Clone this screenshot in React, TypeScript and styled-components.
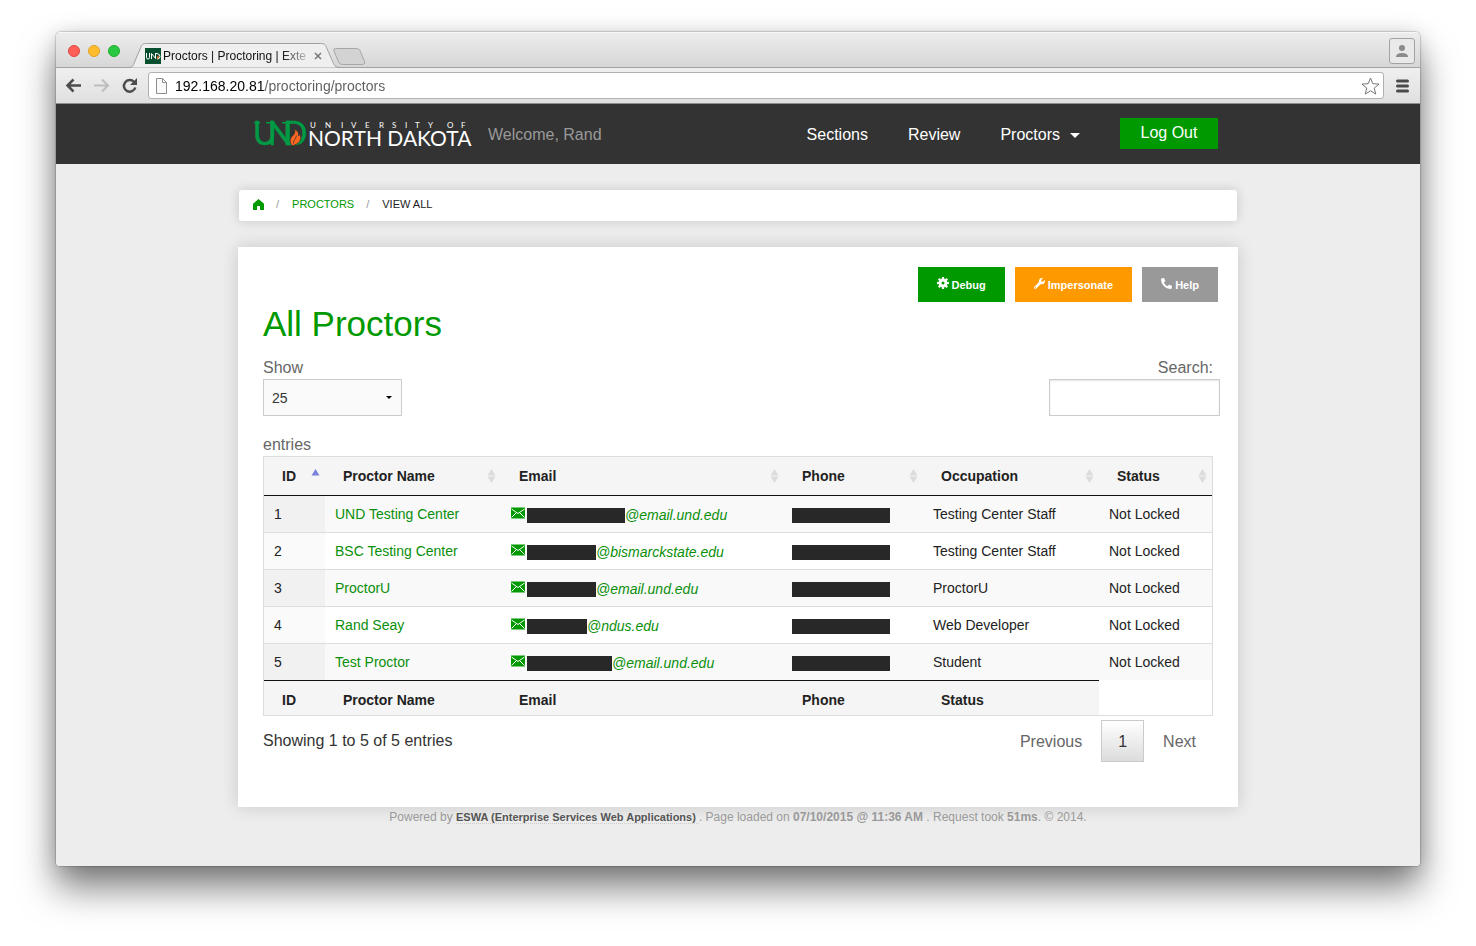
import React from "react";
import styled, { createGlobalStyle, css } from "styled-components";
import { FaPhoneAlt, FaWrench } from "react-icons/fa";

const GREEN = "#009900";
const LINK = "#0a8f0a";

const GlobalStyle = createGlobalStyle`
  *, *::before, *::after { box-sizing: border-box; }
  body {
    margin: 0;
    background: #fff;
    color: #222;
    font-family: "Liberation Sans", Arial, Helvetica, sans-serif;
    font-size: 16px;
    line-height: 20px;
  }
  button, input, select { font-family: inherit; }
  a { text-decoration: none; }
`;

/* ---------- Browser window ---------- */

const Stage = styled.div`
  padding: 32px 56px 80px;
`;

const Window = styled.div`
  border-radius: 5px 5px 4px 4px;
  background: #ededed;
  overflow: hidden;
`;

const WindowShadow = styled.div`
  border-radius: 5px 5px 4px 4px;
  box-shadow: 0 0 1px 1px rgba(0, 0, 0, 0.16), 0 22px 36px rgba(0, 0, 0, 0.5), 0 2px 20px rgba(0, 0, 0, 0.14);
`;

const TabStrip = styled.div`
  display: flex;
  align-items: flex-end;
  height: 36px;
  padding: 0 5px 0 12px;
  background: linear-gradient(#ededed, #d6d6d6);
  box-shadow: inset 0 -1px #a3a3a3, inset 0 1px #f7f7f7;
`;

const Lights = styled.div`
  display: flex;
  gap: 8px;
  padding-bottom: 11px;
`;

const Light = styled.button<{ $fill: string; $edge: string }>`
  width: 12px;
  height: 12px;
  padding: 0;
  border: 1px solid ${(p) => p.$edge};
  border-radius: 50%;
  background: ${(p) => p.$fill};
`;

const Tab = styled.div`
  position: relative;
  display: flex;
  align-items: center;
  width: 216px;
  height: 25px;
  margin-left: 8px;
  padding: 0 16px 0 17px;
`;

const TabShape = styled.svg`
  position: absolute;
  inset: 0;
`;

const Favicon = styled.svg`
  position: relative;
  flex: none;
  margin-right: 2px;
`;

const TabTitle = styled.span`
  position: relative;
  flex: 1;
  white-space: nowrap;
  color: #111;
  font-size: 12px;
  mask-image: linear-gradient(to right, #000 82%, transparent 104%);
`;

const BareButton = styled.button`
  position: relative;
  display: flex;
  flex: none;
  padding: 0;
  border: 0;
  background: none;
`;

const Spacer = styled.div`
  flex: 1;
`;

const NewTab = styled(BareButton)`
  margin: 0 0 3px -12px;
`;

const CloseTab = styled(BareButton)`
  margin: 0 6px;
`;

const UserButton = styled.button`
  display: flex;
  align-items: center;
  justify-content: center;
  width: 26px;
  height: 26px;
  margin-bottom: 4px;
  padding: 0;
  border: 1px solid #a2a2a2;
  border-radius: 3px;
  background: #e9e9e9;
`;

const Toolbar = styled.div`
  display: flex;
  align-items: center;
  height: 36px;
  padding: 0 10px 0 9px;
  border-bottom: 1px solid #8f8f8f;
  background: linear-gradient(#efefef, #e0e0e0);
`;

const NavIcons = styled.div`
  display: flex;
  gap: 12px;
  margin-right: 10px;
`;

const AddressBar = styled.div`
  display: flex;
  flex: 1;
  align-items: center;
  height: 27px;
  margin-right: 11px;
  padding: 0 3px 0 6px;
  border: 1px solid #b0b0b0;
  border-radius: 3px;
  background: #fff;
`;

const Address = styled.input`
  flex: 1;
  height: 22px;
  margin-left: 7px;
  padding: 0;
  border: 0;
  outline: 0;
  color: transparent;
  background: linear-gradient(to right, #000 90px, #5c5c5c 90px);
  background-clip: text;
  font-size: 14px;
`;

/* ---------- Site header ---------- */

const SiteHeader = styled.header`
  background: #333;
`;

const Container = styled.div`
  width: 100%;
  max-width: 1000px;
  margin: 0 auto;
`;

const HeaderInner = styled(Container)`
  display: flex;
  align-items: center;
  height: 60px;
  padding: 2px 20px 0 16px;
`;

const LogoLink = styled.a`
  display: flex;
  margin-right: 16px;
`;

const Welcome = styled.span`
  flex: 1;
  color: #999;
`;

const MainNav = styled.nav`
  display: flex;
  align-items: center;
  gap: 40px;
`;

const NavLink = styled.a`
  display: flex;
  align-items: center;
  gap: 10px;
  color: #fff;
`;

const Caret = styled.span`
  border: 5px solid transparent;
  border-top-color: #fff;
  border-bottom: 0;
`;

const LogOut = styled.button`
  min-width: 98px;
  height: 31px;
  margin-bottom: 4px;
  padding: 0 20px;
  border: 0;
  background: ${GREEN};
  color: #fff;
  font-size: 16px;
`;

/* ---------- Page ---------- */

const Page = styled.main`
  padding: 26px 20px 40px;
`;

const Breadcrumbs = styled.nav`
  display: flex;
  align-items: center;
  height: 31px;
  margin: 0 1px 26px;
  padding: 0 14px 3px;
  border-radius: 3px;
  background: #fff;
  box-shadow: 0 0 12px rgba(0, 0, 0, 0.16);
  font-size: 11px;
  text-transform: uppercase;
`;

const Crumb = styled.a`
  display: flex;
  color: ${GREEN};
`;

const CrumbSlash = styled.span`
  margin: 0 13px 0 12px;
  color: #999;
`;

const Card = styled.section`
  padding: 20px 0 45px;
  background: #fff;
  box-shadow: 0 0 16px rgba(0, 0, 0, 0.16);
`;

const Actions = styled.div`
  display: flex;
  justify-content: flex-end;
  gap: 10px;
  padding: 0 20px;
`;

const ActionButton = styled.button<{ $color: string }>`
  display: flex;
  align-items: center;
  gap: 3px;
  height: 35px;
  padding: 0 19px;
  border: 0;
  background: ${(p) => p.$color};
  color: #fff;
  font-size: 11px;
  font-weight: 700;

  svg {
    margin-bottom: 3px;
  }
`;

const Title = styled.h1`
  margin: 0 0 12px;
  padding: 0 25px;
  color: ${GREEN};
  font-size: 35px;
  font-weight: 400;
  line-height: 44px;
`;

const Filters = styled.div`
  display: flex;
  align-items: flex-start;
  justify-content: space-between;
  padding: 0 18px 1px 25px;
  color: #666;
`;

const LengthLabel = styled.label`
  display: flex;
  flex-direction: column;
`;

const LengthSelect = styled.select`
  width: 139px;
  height: 37px;
  margin: 1px 0 19px;
  padding: 0 8px;
  border: 1px solid #ccc;
  border-radius: 0;
  appearance: none;
  background: #fafafa
    url("data:image/svg+xml,%3Csvg xmlns='http://www.w3.org/2000/svg' width='6' height='3'%3E%3Cpath d='M0 0h6L3 3z'/%3E%3C/svg%3E")
    no-repeat right 9px center;
  color: #333;
  font-size: 14px;
`;

const SearchLabel = styled.label`
  display: flex;
  flex-direction: column;
`;

const SearchText = styled.span`
  padding-right: 7px;
  text-align: right;
`;

const SearchInput = styled.input`
  width: 171px;
  height: 37px;
  margin-top: 1px;
  padding: 8px;
  border: 1px solid #ccc;
  background: #fff;
  box-shadow: inset 0 1px 2px rgba(0, 0, 0, 0.1);
`;

const TableWrap = styled.div`
  padding: 0 25px;
`;

const Table = styled.table`
  width: 100%;
  border: 1px solid #ddd;
  border-spacing: 0;
  table-layout: fixed;
  font-size: 14px;
  text-align: left;
`;

const headCell = css`
  padding: 0;
  background: #f5f5f5;
  color: #222;
`;

const HeadCell = styled.th`
  ${headCell}
  height: 39px;
  border-bottom: 1px solid #111;
`;

const FootCell = styled.th`
  ${headCell}
  height: 35px;
  padding: 3px 18px 0;
  border-top: 1px solid #111;
`;

const SortButton = styled.button`
  display: flex;
  align-items: center;
  justify-content: space-between;
  width: 100%;
  padding: 0 5px 0 18px;
  border: 0;
  background: none;
  color: inherit;
  font-size: 14px;
  font-weight: 700;
  line-height: 20px;
`;

const Row = styled.tr`
  background: #fff;

  &:nth-child(odd) {
    background: #f9f9f9;
  }
`;

const Cell = styled.td<{ $sorted?: boolean }>`
  height: 37px;
  padding: 0 10px;
  border-top: 1px solid #ddd;
  white-space: nowrap;

  ${Row}:first-child > & {
    height: 36px;
    border-top: 0;
  }

  ${(p) =>
    p.$sorted &&
    css`
      background: #fafafa;

      ${Row}:nth-child(odd) > & {
        background: #f1f1f1;
      }
    `}
`;

const TableLink = styled.a`
  color: ${LINK};
`;

const EmailLine = styled.div`
  display: flex;
  align-items: center;
`;

const MailIcon = styled.svg`
  flex: none;
  margin: 0 2px 3px 0;
`;

const Redaction = styled.span<{ $width: number }>`
  display: block;
  flex: none;
  width: ${(p) => p.$width}px;
  height: 15px;
  margin-top: 2px;
  background: #282828;
`;

const PhoneLine = styled.div`
  display: flex;
  margin-left: -2px;
`;

const EmailLink = styled.a`
  padding-top: 1px;
  color: ${LINK};
  font-style: italic;
`;

const TableFooter = styled.div`
  display: flex;
  align-items: center;
  justify-content: space-between;
  padding: 4px 25px 0;
  color: #333;
`;

const Pagination = styled.nav`
  display: flex;
  align-items: center;
  gap: 2px;
`;

const PageButton = styled.button<{ $current?: boolean }>`
  height: 42px;
  padding: 2px 16px 0;
  border: 1px solid transparent;
  background: none;
  color: #666;
  font-size: 16px;

  ${(p) =>
    p.$current &&
    css`
      border-color: #cacaca;
      background: linear-gradient(#fff, #dcdcdc);
      color: #333;
    `}
`;

const Footer = styled.footer`
  padding-top: 1px;
  color: #999;
  font-size: 12px;
  line-height: 18px;
  text-align: center;
`;

const FooterLink = styled.a`
  border-bottom: 1px dotted #ccc;
  color: #555;
  font-size: 11px;
  font-weight: 700;
`;

/* ---------- Drawings ---------- */

const LogoSvg = styled.svg`
  display: block;
  overflow: visible;
`;

const Logo = () => (
  <LogoSvg width="218" height="32" viewBox="0 0 218 32" role="img" aria-label="University of North Dakota">
    <g fill="#009a44" stroke="#009a44" strokeWidth="0.500" fontFamily="Lato, sans-serif" fontSize="32">
      <text x="-1" y="26">U</text>
      <text x="14" y="26">N</text>
      <text x="29" y="26">D</text>
    </g>
    <g fill="#009a44">
      <path d="M0 3h6v1.500H0zM12 3h7v1.500h-7zM28 3h6v1.500h-6z" />
    </g>
    <path
      d="M38 26.500c-3-3.500-2-7.500.5-9.500 2-2 3-4 2-7 3.500 2 4.500 4.500 4 7 .8-.5 1.200-1.200 1.200-2.500 2.500 4.500.8 9.500-5.200 11.500-1 .5-1.500.5-2.500.5z"
      fill="#ff671f"
      stroke="#333"
      strokeWidth="0.800"
    />
    <path d="M39.500 24.500c-.5-3 2.500-4.500 3-8" fill="none" stroke="#333" strokeWidth="0.800" />
    <g fill="#fff" fontFamily="Lato, sans-serif">
      <text x="54" y="27" fontSize="21">NORTH DAKOTA</text>
      <g fontSize="8">
        {[..."UNIVERSITY"].map((letter, i) => (
          <text key={i} x={[56, 71, 87, 97, 111, 125, 138, 151, 161, 174][i]} y="9">{letter}</text>
        ))}
        <text x="193" y="9">O</text>
        <text x="207" y="9">F</text>
      </g>
    </g>
  </LogoSvg>
);

const SortArrows = ({ active }: { active?: boolean }) => (
  <svg width="9" height="14" viewBox="0 0 9 14" aria-hidden="true">
    <path d="M0.500 6.500 4.500 0l4 6.500z" fill={active ? "#7a80dd" : "#dcdcdc"} />
    {!active && <path d="M0.500 7.500h8L4.500 14z" fill="#dcdcdc" />}
  </svg>
);

const Gear = () => (
  <svg width="12" height="12" viewBox="0 0 12 12" fill="none" stroke="#fff" aria-hidden="true">
    <circle cx="6" cy="6" r="3" strokeWidth="3" />
    <circle cx="6" cy="6" r="5" strokeWidth="2" pathLength="32" strokeDasharray="2.200 1.800" strokeDashoffset="1.100" />
  </svg>
);

const Mail = () => (
  <MailIcon width="14" height="12" viewBox="0 0 14 12" aria-hidden="true">
    <path d="M0 0.500h14v11H0z" fill={GREEN} />
    <path d="M0.500 2 7 6.500 13.500 2M0.500 10.500 5 6M13.500 10.500 9 6" fill="none" stroke="#fff" strokeWidth="1" />
  </MailIcon>
);

const Home = () => (
  <svg width="11" height="11" viewBox="0 0 11 11" role="img" aria-label="Home">
    <path d="M5.500 0 11 4.800V11H7V7H4v4H0V4.800z" fill={GREEN} />
  </svg>
);

const BrowserChrome = () => (
  <>
    <TabStrip>
      <Lights>
        <Light aria-label="Close" $fill="#ff5f57" $edge="#e2463f" />
        <Light aria-label="Minimize" $fill="#ffbd2e" $edge="#e0a028" />
        <Light aria-label="Zoom" $fill="#28c940" $edge="#1dad2b" />
      </Lights>
      <Tab>
        <TabShape width="216" height="25" viewBox="0 0 216 25" aria-hidden="true">
          <path
            d="M0 24.500c4 0 5-1 6-4L12.500 5c1.500-3.500 2-4.500 6-4.500h174c4 0 5 1 6 4l7 16c1.500 3 3 4 7 4z"
            fill="#efefef"
          />
          <path
            d="M0 24.500c4 0 5-1 6-4L12.500 5c1.500-3.500 2-4.500 6-4.500h174c4 0 5 1 6 4l7 16c1.500 3 3 4 7 4"
            fill="none"
            stroke="#a0a0a0"
          />
        </TabShape>
        <Favicon width="16" height="16" viewBox="0 0 16 16" aria-hidden="true">
          <path d="M0 0h16v16H0z" fill="#07502f" />
          <path d="M1.500 5v4.500q0 1.500 1.500 1.500t1.500-1.500V5M6.500 11V5.500l4 5V5M11 5.500h1q3 .5 3 3t-3 2.500" fill="none" stroke="#fff" />
          <path d="M12 11c-1-2 1-2 1-4 1.500 2 1 3-1 4z" fill="#f26a21" />
        </Favicon>
        <TabTitle>Proctors | Proctoring | Exte</TabTitle>
        <CloseTab aria-label="Close tab">
          <svg width="8" height="8" viewBox="0 0 8 8">
            <path d="m1 1 6 6M7 1 1 7" stroke="#777" strokeWidth="1.500" />
          </svg>
        </CloseTab>
      </Tab>
      <NewTab aria-label="New tab">
        <svg width="34" height="17" viewBox="0 0 34 17">
          <path
            d="M3.500.5h21q2.500 0 3.500 2l4.500 11q1 3-2 3h-20q-3 0-4-2.500l-4.500-11q-1-2.500 1.500-2.500z"
            fill="#d3d3d3"
            stroke="#a6a6a6"
          />
        </svg>
      </NewTab>
      <Spacer />
      <UserButton aria-label="User">
        <svg width="14" height="14" viewBox="0 0 14 14" fill="#8c8c8c">
          <circle cx="7" cy="4" r="3" />
          <path d="M1 13q0-4 6-4t6 4z" />
        </svg>
      </UserButton>
    </TabStrip>
    <Toolbar>
      <NavIcons>
        <BareButton aria-label="Back">
          <svg width="17" height="16" viewBox="0 0 17 16" fill="none" stroke="#4d4d4d" strokeWidth="2.500">
            <path d="M16 7.500H3M8.500 1.500 2.500 7.500l6 6" />
          </svg>
        </BareButton>
        <BareButton aria-label="Forward">
          <svg width="16" height="16" viewBox="0 0 16 16" fill="none" stroke="#bdbdbd" strokeWidth="2">
            <path d="M0 7.500h13M8 1.500l6 6-6 6" />
          </svg>
        </BareButton>
        <BareButton aria-label="Reload">
          <svg width="16" height="16" viewBox="0 0 16 16">
            <path d="M12 4A5.800 5.800 0 1 0 13.300 9.500" fill="none" stroke="#4d4d4d" strokeWidth="2.500" />
            <path d="M15 0v7H8z" fill="#4d4d4d" />
          </svg>
        </BareButton>
      </NavIcons>
      <AddressBar>
        <svg width="13" height="16" viewBox="0 0 13 16" fill="#fafafa" stroke="#8e8e8e" aria-hidden="true">
          <path d="M1.500.5h6l4 4v11h-10zM7.500.5v4h4" />
        </svg>
        <Address aria-label="Address" defaultValue="192.168.20.81/proctoring/proctors" />
        <BareButton aria-label="Bookmark">
          <svg width="19" height="18" viewBox="0 0 19 18" fill="none" stroke="#777" strokeLinejoin="round">
            <path d="m9.500 1 2.300 5.700 6.200.4-4.800 4 1.600 6-5.300-3.300-5.300 3.300 1.600-6-4.800-4 6.200-.4z" />
          </svg>
        </BareButton>
      </AddressBar>
      <BareButton aria-label="Menu">
        <svg width="15" height="14" viewBox="0 0 15 14" stroke="#4a4a4a" strokeWidth="3" strokeLinecap="round">
          <path d="M2.500 2h10M2.500 7h10M2.500 12h10" />
        </svg>
      </BareButton>
    </Toolbar>
  </>
);

/* ---------- Data ---------- */

const columns = [
  { name: "ID", width: 61 },
  { name: "Proctor Name", width: 176 },
  { name: "Email", width: 283 },
  { name: "Phone", width: 139 },
  { name: "Occupation", width: 176 },
  { name: "Status", width: 113 },
];

const footNames = ["ID", "Proctor Name", "Email", "Phone", "Status"];

const proctors = [
  { name: "UND Testing Center", hidden: 98, domain: "@email.und.edu", job: "Testing Center Staff" },
  { name: "BSC Testing Center", hidden: 69, domain: "@bismarckstate.edu", job: "Testing Center Staff" },
  { name: "ProctorU", hidden: 69, domain: "@email.und.edu", job: "ProctorU" },
  { name: "Rand Seay", hidden: 60, domain: "@ndus.edu", job: "Web Developer" },
  { name: "Test Proctor", hidden: 85, domain: "@email.und.edu", job: "Student" },
];

const ProctorTable = () => (
  <Table>
    <colgroup>
      {columns.map((c) => (
        <col key={c.name} style={{ width: `${(c.width / 948) * 100}%` }} />
      ))}
    </colgroup>
    <thead>
      <tr>
        {columns.map((c, i) => (
          <HeadCell key={c.name} scope="col">
            <SortButton>
              {c.name}
              <SortArrows active={i === 0} />
            </SortButton>
          </HeadCell>
        ))}
      </tr>
    </thead>
    <tbody>
      {proctors.map((p, i) => (
        <Row key={p.name}>
          <Cell $sorted>{i + 1}</Cell>
          <Cell>
            <TableLink href="#">{p.name}</TableLink>
          </Cell>
          <Cell>
            <EmailLine>
              <Mail />
              <Redaction $width={p.hidden} />
              <EmailLink href="#">{p.domain}</EmailLink>
            </EmailLine>
          </Cell>
          <Cell>
            <PhoneLine>
              <Redaction $width={98} />
            </PhoneLine>
          </Cell>
          <Cell>{p.job}</Cell>
          <Cell>Not Locked</Cell>
        </Row>
      ))}
    </tbody>
    <tfoot>
      <tr>
        {footNames.map((name) => (
          <FootCell key={name}>{name}</FootCell>
        ))}
      </tr>
    </tfoot>
  </Table>
);

export default function App() {
  return (
    <Stage>
      <GlobalStyle />
      <WindowShadow>
        <Window>
          <BrowserChrome />
          <SiteHeader>
            <HeaderInner>
              <LogoLink href="#">
                <Logo />
              </LogoLink>
              <Welcome>Welcome, Rand</Welcome>
              <MainNav>
                <NavLink href="#">Sections</NavLink>
                <NavLink href="#">Review</NavLink>
                <NavLink href="#">
                  Proctors
                  <Caret />
                </NavLink>
                <LogOut>Log Out</LogOut>
              </MainNav>
            </HeaderInner>
          </SiteHeader>
          <Page>
            <Container>
              <Breadcrumbs aria-label="Breadcrumb">
                <Crumb href="#">
                  <Home />
                </Crumb>
                <CrumbSlash>/</CrumbSlash>
                <Crumb href="#">Proctors</Crumb>
                <CrumbSlash>/</CrumbSlash>
                <span>View All</span>
              </Breadcrumbs>
              <Card>
                <Actions>
                  <ActionButton $color="#009900">
                    <Gear />
                    Debug
                  </ActionButton>
                  <ActionButton $color="#ff9900">
                    <FaWrench size={11} />
                    Impersonate
                  </ActionButton>
                  <ActionButton $color="#999999">
                    <FaPhoneAlt size={11} />
                    Help
                  </ActionButton>
                </Actions>
                <Title>All Proctors</Title>
                <Filters>
                  <LengthLabel>
                    Show
                    <LengthSelect defaultValue="25">
                      <option>25</option>
                    </LengthSelect>
                    entries
                  </LengthLabel>
                  <SearchLabel>
                    <SearchText>Search:</SearchText>
                    <SearchInput type="search" />
                  </SearchLabel>
                </Filters>
                <TableWrap>
                  <ProctorTable />
                </TableWrap>
                <TableFooter>
                  <span>Showing 1 to 5 of 5 entries</span>
                  <Pagination aria-label="Pagination">
                    <PageButton>Previous</PageButton>
                    <PageButton $current>1</PageButton>
                    <PageButton>Next</PageButton>
                  </Pagination>
                </TableFooter>
              </Card>
              <Footer>
                Powered by <FooterLink href="#">ESWA (Enterprise Services Web Applications) </FooterLink>. Page loaded on{" "}
                <b>07/10/2015 @ 11:36 AM</b> . Request took <b>51ms</b>. © 2014.
              </Footer>
            </Container>
          </Page>
        </Window>
      </WindowShadow>
    </Stage>
  );
}
